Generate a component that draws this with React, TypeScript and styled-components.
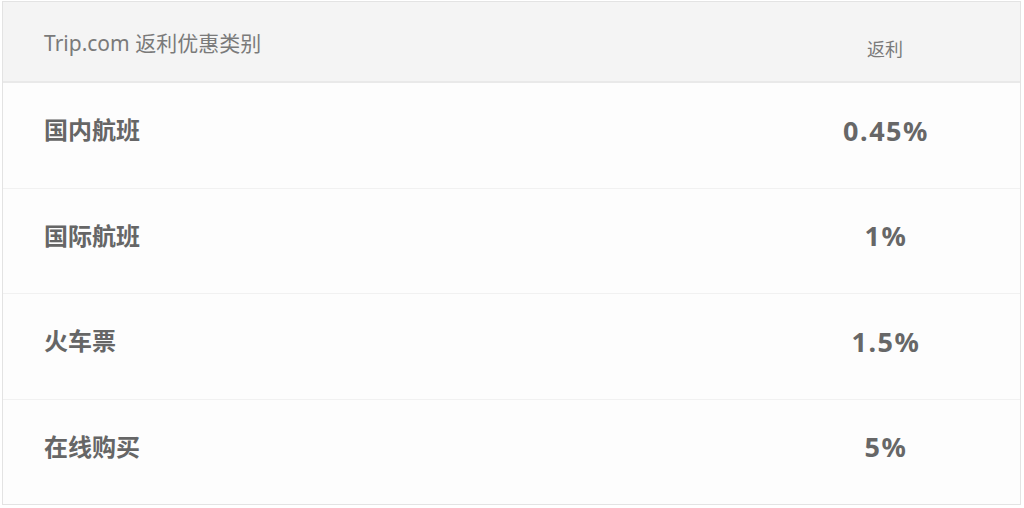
import React from "react";
import styled, { createGlobalStyle } from "styled-components";

const Global = createGlobalStyle`
  html, body { margin: 0; padding: 0; background: #ffffff; }
  body { font-family: "Noto Sans", "Noto Sans CJK SC", sans-serif; }
`;

const Frame = styled.div`
  margin: 1px 2px 0 2px;
  width: 1019px;
  height: 504px;
  box-sizing: border-box;
  border: 1px solid #e3e3e3;
  background: #fdfdfd;
  display: flex;
  flex-direction: column;
`;

const HeaderRow = styled.div`
  height: 81px;
  box-sizing: border-box;
  background: #f4f4f4;
  border-bottom: 2px solid #e9e9e9;
  display: grid;
  grid-template-columns: 1fr 270px;
`;

const HeadCell = styled.div<{ $align?: "left" | "center"; $size: number; $offset: number }>`
  padding-left: ${(p) => (p.$align === "center" ? "0" : "41px")};
  padding-top: ${(p) => p.$offset}px;
  text-align: ${(p) => p.$align ?? "left"};
  font-size: ${(p) => p.$size}px;
  color: #7a7a7a;
  line-height: 1;
`;

const Row = styled.div<{ $last?: boolean }>`
  flex: 1;
  display: grid;
  grid-template-columns: 1fr 270px;
  align-items: center;
  padding-bottom: 10px;
  border-bottom: ${(p) => (p.$last ? "none" : "1px solid #f1f1f1")};
`;

const Label = styled.div`
  padding-left: 41px;
  font-size: 24px;
  font-weight: 700;
  color: #666666;
  line-height: 1;
`;

const Value = styled.div`
  text-align: center;
  padding-left: 2px;
  font-size: 27px;
  font-weight: 700;
  color: #676767;
  letter-spacing: 1.5px;
  line-height: 1;
`;

const rows = [
  { label: "国内航班", value: "0.45%" },
  { label: "国际航班", value: "1%" },
  { label: "火车票", value: "1.5%" },
  { label: "在线购买", value: "5%" },
];

export default function App() {
  return (
    <>
      <Global />
      <Frame>
        <HeaderRow>
          <HeadCell $size={21} $offset={31}>Trip.com 返利优惠类别</HeadCell>
          <HeadCell $align="center" $size={18} $offset={38}>返利</HeadCell>
        </HeaderRow>
        {rows.map((r, i) => (
          <Row key={r.label} $last={i === rows.length - 1}>
            <Label>{r.label}</Label>
            <Value>{r.value}</Value>
          </Row>
        ))}
      </Frame>
    </>
  );
}
